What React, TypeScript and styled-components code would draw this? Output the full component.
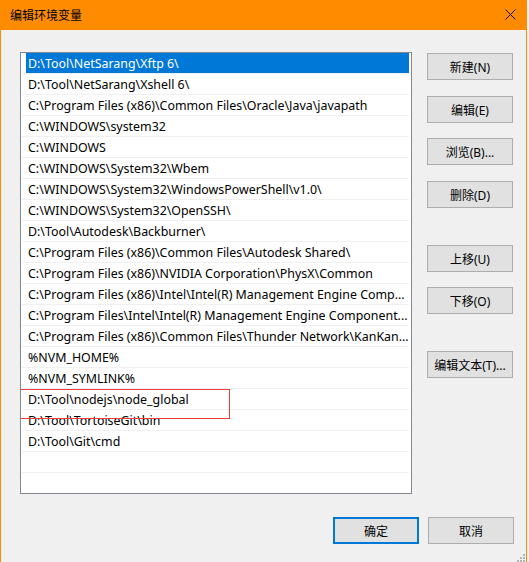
import React from "react";
import styled, { createGlobalStyle } from "styled-components";

const GlobalStyle = createGlobalStyle`
  html, body {
    margin: 0;
    padding: 0;
    background: #f0f0f0;
    overflow: hidden;
  }
  body {
    font-family: "Noto Sans", "Noto Sans CJK SC", sans-serif;
    font-size: 12px;
    color: #000;
  }
`;

const paths: string[] = [
  "D:\\Tool\\NetSarang\\Xftp 6\\",
  "D:\\Tool\\NetSarang\\Xshell 6\\",
  "C:\\Program Files (x86)\\Common Files\\Oracle\\Java\\javapath",
  "C:\\WINDOWS\\system32",
  "C:\\WINDOWS",
  "C:\\WINDOWS\\System32\\Wbem",
  "C:\\WINDOWS\\System32\\WindowsPowerShell\\v1.0\\",
  "C:\\WINDOWS\\System32\\OpenSSH\\",
  "D:\\Tool\\Autodesk\\Backburner\\",
  "C:\\Program Files (x86)\\Common Files\\Autodesk Shared\\",
  "C:\\Program Files (x86)\\NVIDIA Corporation\\PhysX\\Common",
  "C:\\Program Files (x86)\\Intel\\Intel(R) Management Engine Comp...",
  "C:\\Program Files\\Intel\\Intel(R) Management Engine Component...",
  "C:\\Program Files (x86)\\Common Files\\Thunder Network\\KanKan...",
  "%NVM_HOME%",
  "%NVM_SYMLINK%",
  "D:\\Tool\\nodejs\\node_global",
  "D:\\Tool\\TortoiseGit\\bin",
  "D:\\Tool\\Git\\cmd",
  "",
  "",
];

const sideButtons = [
  { label: "新建(N)", gap: 0 },
  { label: "编辑(E)", gap: 16 },
  { label: "浏览(B)...", gap: 15 },
  { label: "删除(D)", gap: 16 },
  { label: "上移(U)", gap: 37 },
  { label: "下移(O)", gap: 15 },
  { label: "编辑文本(T)...", gap: 37 },
];

const CloseIcon = () => (
  <svg width="11" height="11" viewBox="0 0 11 11">
    <path d="M0.5 0.5 L10.5 10.5 M10.5 0.5 L0.5 10.5" stroke="#000" strokeWidth="1" fill="none" />
  </svg>
);

const GripIcon = () => (
  <svg width="10" height="10" viewBox="0 0 10 10">
    <g fill="#b4b4b4">
      <rect x="7" y="0" width="2" height="2" />
      <rect x="4" y="3" width="2" height="2" />
      <rect x="7" y="3" width="2" height="2" />
      <rect x="1" y="6" width="2" height="2" />
      <rect x="4" y="6" width="2" height="2" />
      <rect x="7" y="6" width="2" height="2" />
    </g>
  </svg>
);

const App: React.FunctionComponent = () => {
  return (
    <>
      <GlobalStyle />
      <Dialog>
        <TitleBar>
          <Title>编辑环境变量</Title>
          <CloseBox>
            <CloseIcon />
          </CloseBox>
        </TitleBar>
        <Body>
          <MainRow>
            <PathList>
              {paths.map((p, i) => (
                <Row key={i}>
                  <Label selected={i === 0}>{p}</Label>
                </Row>
              ))}
              <Marker />
            </PathList>
            <SideColumn>
              {sideButtons.map((b) => (
                <Button key={b.label} gap={b.gap}>
                  {b.label}
                </Button>
              ))}
            </SideColumn>
          </MainRow>
          <Footer>
            <Button focused>确定</Button>
            <Button>取消</Button>
          </Footer>
        </Body>
        <Grip>
          <GripIcon />
        </Grip>
      </Dialog>
    </>
  );
};

export default App;

const Dialog = styled.div`
  position: relative;
  width: 527px;
  height: 562px;
  box-sizing: border-box;
  border-left: 1px solid #ff8c00;
  border-right: 1px solid #ff8c00;
  background: #f0f0f0;
  overflow: hidden;
`;

const TitleBar = styled.div`
  display: flex;
  align-items: center;
  justify-content: space-between;
  height: 30px;
  margin: 0 -1px;
  padding: 0 10px 0 10px;
  background: #ff8c00;
`;

const Title = styled.div`
  font-family: "Noto Sans CJK SC", sans-serif;
  font-size: 12px;
  line-height: 30px;
  color: #000;
`;

const CloseBox = styled.div`
  display: flex;
  align-items: center;
  justify-content: center;
  width: 14px;
  height: 14px;
  margin-top: -1px;
`;

const Body = styled.div`
  display: flex;
  flex-direction: column;
  padding: 22px 12px 0 19px;
`;

const MainRow = styled.div`
  display: flex;
  gap: 15px;
`;

const PathList = styled.div`
  position: relative;
  width: 392px;
  height: 442px;
  box-sizing: border-box;
  border: 1px solid #828790;
  background: #fff;
  padding: 0 2px 0 1px;
  overflow: hidden;
`;

const Row = styled.div`
  height: 20px;
  border-bottom: 1px solid #f0f0f0;
  display: flex;
`;

const Label = styled.div<{ selected?: boolean }>`
  flex: 1;
  box-sizing: border-box;
  height: 20px;
  margin-left: 4px;
  padding: 2px 0 0 2px;
  font-size: 12.4px;
  line-height: 18px;
  white-space: nowrap;
  overflow: hidden;
  background: ${(p) => (p.selected ? "#0078d7" : "transparent")};
  color: ${(p) => (p.selected ? "#fff" : "#000")};
`;

const Marker = styled.div`
  position: absolute;
  left: -2px;
  top: 336px;
  width: 209px;
  height: 28px;
  border: 1px solid #f03c3c;
  pointer-events: none;
`;

const SideColumn = styled.div`
  display: flex;
  flex-direction: column;
  padding-top: 1px;
`;

const Button = styled.div<{ gap?: number; focused?: boolean }>`
  display: flex;
  align-items: center;
  justify-content: center;
  width: 86px;
  height: 27px;
  box-sizing: border-box;
  margin-top: ${(p) => p.gap ?? 0}px;
  border: ${(p) => (p.focused ? "2px solid #0078d7" : "1px solid #adadad")};
  background: #e1e1e1;
  font-size: 12px;
  color: #000;
  white-space: nowrap;
`;

const Footer = styled.div`
  display: flex;
  justify-content: flex-end;
  gap: 9px;
  margin-top: 23px;
`;

const Grip = styled.div`
  position: absolute;
  right: 0;
  bottom: 1px;
  width: 10px;
  height: 10px;
`;
